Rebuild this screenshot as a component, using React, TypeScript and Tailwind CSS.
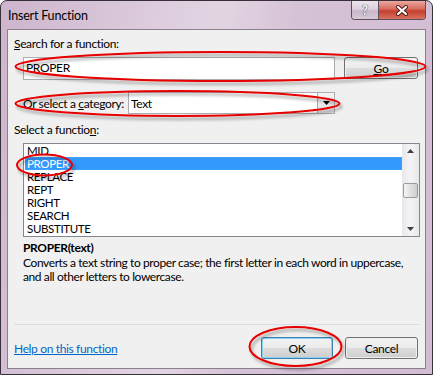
import React from 'react';

const font = { fontFamily: 'Lato, "Noto Sans", sans-serif' };

const functions = ['MID', 'PROPER', 'REPLACE', 'REPT', 'RIGHT', 'SEARCH', 'SUBSTITUTE'];

function Button({ children, primary }: { children: React.ReactNode; primary?: boolean }) {
  return (
    <div
      className={`h-[22px] rounded-[3px] border p-px ${
        primary ? 'border-[#3c7fb1] shadow-[inset_0_0_0_1px_#8ed0f0]' : 'border-[#707070]'
      }`}
    >
      <div className="flex h-full items-center justify-center rounded-[2px] bg-[linear-gradient(#f2f2f2_0%,#ebebeb_50%,#dddddd_51%,#cfcfcf_100%)] text-[12px] text-black">
        {children}
      </div>
    </div>
  );
}

function Ellipses() {
  return (
    <svg className="pointer-events-none absolute left-0 top-0" width="433" height="375">
      <defs>
        <filter id="sh" x="-10%" y="-30%" width="120%" height="160%">
          <feDropShadow dx="2" dy="3" stdDeviation="1.6" floodColor="#000" floodOpacity="0.35" />
        </filter>
      </defs>
      <g fill="none" stroke="#e60000" strokeWidth="2" filter="url(#sh)">
        <ellipse cx="220.5" cy="66.5" rx="205" ry="14.5" />
        <ellipse cx="177.5" cy="103.5" rx="162" ry="12.5" />
        <ellipse cx="44.5" cy="165" rx="27.5" ry="10.5" />
        <ellipse cx="295.5" cy="346.5" rx="46" ry="19.5" />
      </g>
    </svg>
  );
}

export default function App() {
  return (
    <div className="relative h-[375px] w-[433px] bg-white" style={font}>
      <div className="flex h-[375px] w-[433px] flex-col rounded-t-[7px] border border-[#383038] bg-[linear-gradient(100deg,#cdb5cd_0%,#dccbdc_30%,#e2d5e2_45%,#d6c2d6_60%,#d2bcd2_100%)]">
        {/* title bar */}
        <div className="flex h-[28px] shrink-0 items-start justify-between">
          <div className="ml-[7px] mt-[7px] text-[12.5px] leading-[15px] tracking-[-0.2px] text-black">Insert Function</div>
          <div className="mr-[6px] flex h-[19px] overflow-hidden rounded-b-[4px] border-x border-b border-[#5a4f5a]">
            <div className="flex w-[27px] items-center justify-center border-r border-[#5a4f5a] bg-[linear-gradient(#ece4ec_0%,#ddd0dd_45%,#c9b7c9_55%,#d8c8d8_100%)] text-[13px] font-bold leading-none text-white [text-shadow:0_0_1px_#333,0_0_1px_#333]">
              ?
            </div>
            <div className="flex w-[46px] items-center justify-center bg-[linear-gradient(#eaa89f_0%,#d86a5c_45%,#c3402f_55%,#d9705f_100%)]">
              <svg width="14" height="11" viewBox="0 0 14 11">
                <path d="M3 2 L11 9 M11 2 L3 9" stroke="#4a1a14" strokeWidth="4" strokeLinecap="round" />
                <path d="M3 2 L11 9 M11 2 L3 9" stroke="#fff" strokeWidth="2.2" strokeLinecap="round" />
              </svg>
            </div>
          </div>
        </div>

        {/* client area */}
        <div className="mx-[6px] mb-[5px] flex flex-1 flex-col border border-[#8a7f8a] bg-[#f0f0f0] pl-[6px] pr-[5px] text-[12px] leading-[15px] tracking-[-0.35px] text-black">
          <div className="mt-[6px] h-[15px]">
            <span className="underline">S</span>earch for a function:
          </div>

          <div className="ml-[9px] mt-[6px] flex h-[23px]">
            <div className="flex w-[312px] items-start border border-[#abadb3] bg-white pl-[2px] pt-[2px]">PROPER</div>
            <div className="ml-[9px] w-[74px]">
              <Button>
                <span className="underline">G</span>o
              </Button>
            </div>
          </div>

          <div className="ml-[9px] mt-[12px] flex h-[22px] items-center">
            <div className="w-[105px] whitespace-nowrap">
              Or select a <span className="underline">c</span>ategory:
            </div>
            <div className="flex h-[22px] w-[207px] border border-[#abadb3] bg-white">
              <div className="flex flex-1 items-center pl-[2px]">Text</div>
              <div className="flex w-[17px] items-center justify-center border-l border-[#abadb3] bg-[linear-gradient(#f4f4f4,#e2e2e2)]">
                <svg width="7" height="4" viewBox="0 0 7 4">
                  <path d="M0 0 H7 L3.5 4 Z" fill="#000" />
                </svg>
              </div>
            </div>
          </div>

          <div className="mt-[8px] h-[15px]">
            Select a functio<span className="underline">n</span>:
          </div>

          <div className="ml-[9px] mt-[6px] flex h-[94px] border border-[#828790] bg-white">
            <div className="flex-1 overflow-hidden pl-px">
              {functions.map((f) => (
                <div
                  key={f}
                  className={`h-[13px] pl-[2px] text-[11.5px] leading-[13px] ${
                    f === 'PROPER'
                      ? 'bg-[#3399ff] text-white outline-1 -outline-offset-1 outline-dotted outline-[#c8903a]'
                      : 'text-black'
                  }`}
                >
                  {f}
                </div>
              ))}
            </div>
            <div className="flex w-[17px] flex-col items-center justify-between bg-[linear-gradient(90deg,#e8e8ec,#f4f4f6,#e8e8ec)] py-[5px]">
              <svg width="7" height="4" viewBox="0 0 7 4">
                <path d="M0 4 H7 L3.5 0 Z" fill="#404040" />
              </svg>
              <div className="mt-[30px] h-[15px] w-[15px] rounded-[2px] border border-[#9a9a9a] bg-[linear-gradient(90deg,#f4f4f4,#e0e0e0,#cfcfcf)]" />
              <div className="flex-1" />
              <svg width="7" height="4" viewBox="0 0 7 4">
                <path d="M0 0 H7 L3.5 4 Z" fill="#404040" />
              </svg>
            </div>
          </div>

          <div className="ml-[9px] mt-[3px] h-[15px] font-bold">PROPER(text)</div>
          <div className="ml-[9px] mt-px whitespace-nowrap leading-[14px] tracking-[-0.4px]">
            Converts a text string to proper case; the first letter in each word in uppercase,
            <br />
            and all other letters to lowercase.
          </div>

          <div className="mt-[40px] h-px bg-[#d5dfe5]" />

          <div className="mt-[12px] flex h-[22px] items-center">
            <div className="flex-1 text-[#0066cc] underline">Help on this function</div>
            <div className="w-[72px]">
              <Button primary>OK</Button>
            </div>
            <div className="ml-[12px] mr-[2px] w-[73px]">
              <Button>Cancel</Button>
            </div>
          </div>
        </div>
      </div>
      <Ellipses />
    </div>
  );
}
